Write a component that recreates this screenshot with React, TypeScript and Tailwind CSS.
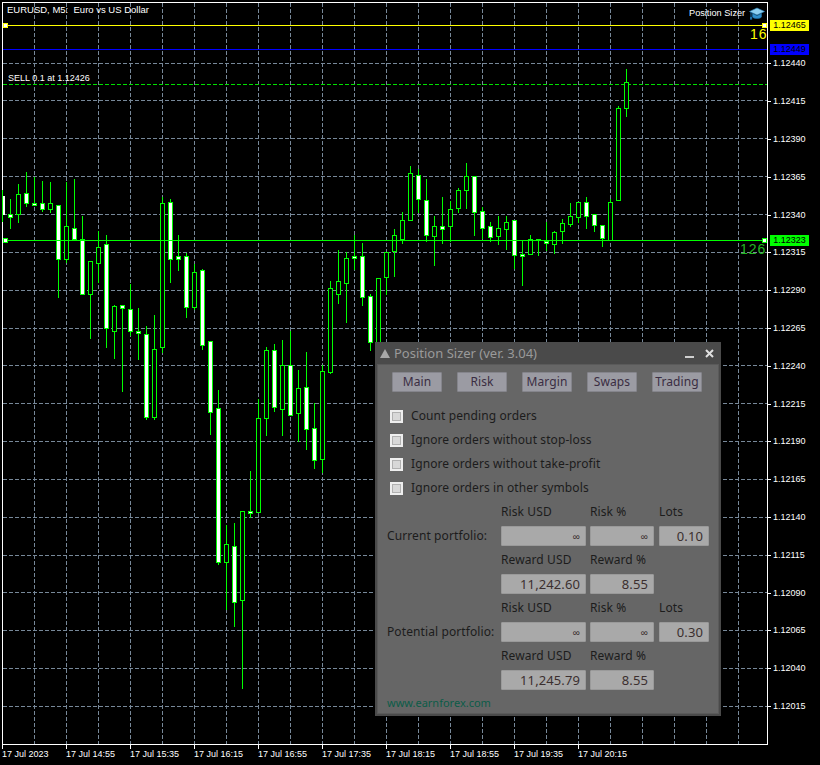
import React from "react";

type C = [number, number, number, number, number, number];
// x, wickTop, wickBottom, bodyTop, bodyBottom, filled
const candles: C[] = [
  [2,190,222,196,214,1],[10,199,229,214,217,1],[18,184,223,194,214,0],[26,172,207,193,203,1],[34,177,206,203,205,1],
  [42,181,212,203,209,1],[50,182,213,203,209,0],[58,205,298,205,259,1],[66,182,263,226,259,0],[74,179,240,228,239,1],
  [82,216,295,239,294,1],[90,261,339,261,294,0],[98,231,283,247,263,0],[106,235,348,244,328,1],[114,305,359,306,331,0],
  [122,305,392,305,308,1],[130,284,336,309,331,1],[138,308,360,331,333,1],[146,326,420,334,417,1],[154,315,420,349,417,0],
  [162,197,353,203,347,0],[170,199,283,202,259,1],[178,235,271,256,259,1],[186,253,318,256,307,1],[194,264,310,272,307,0],
  [202,269,350,270,345,1],[210,341,435,341,412,1],[218,390,565,408,562,1],[226,525,610,544,562,0],[234,523,627,546,602,1],
  [242,511,689,511,600,0],[250,471,518,511,513,1],[258,399,512,418,512,0],[266,347,436,350,418,0],[274,344,412,350,407,1],
  [282,340,436,365,409,0],[290,331,415,365,415,1],[298,370,442,388,413,0],[306,352,450,387,429,1],[314,403,469,428,460,1],
  [322,365,473,371,459,0],[330,281,374,288,372,0],[338,250,304,281,294,0],[346,252,323,258,283,0],[354,235,270,256,258,1],
  [362,243,306,256,297,1],[370,294,351,296,342,1],[378,278,345,278,345,0],[386,252,295,252,277,0],[394,229,277,235,251,0],
  [402,212,244,220,239,0],[410,166,220,173,220,0],[418,169,213,175,199,1],[426,179,242,200,235,1],[434,216,266,226,236,0],
  [442,197,244,226,229,1],[450,201,242,209,226,0],[458,188,213,190,208,0],[466,163,209,176,190,0],[474,176,236,176,212,1],
  [482,207,239,211,228,1],[490,222,242,226,237,1],[498,216,245,228,236,0],[506,216,250,222,229,0],[514,220,269,220,255,1],
  [522,240,286,254,256,1],[530,235,254,239,254,0],[538,239,256,239,240,1],[546,222,251,241,243,1],[554,231,254,232,244,0],
  [562,219,244,223,231,0],[570,203,227,216,224,0],[578,202,223,202,217,0],[586,197,229,202,216,1],[594,214,232,214,225,1],
  [602,225,247,225,238,1],[610,199,240,202,240,0],[618,106,200,108,200,0],[626,69,117,82,108,0],
];

const prices = ["1.12440","1.12415","1.12390","1.12365","1.12340","1.12315","1.12290","1.12265","1.12240","1.12215","1.12190","1.12165","1.12140","1.12115","1.12090","1.12065","1.12040","1.12015"];
const gridYs = [63,100,138,176,214,252,290,328,365,403,441,479,517,555,592,630,668,706];
const gridXs = Array.from({ length: 23 }, (_, i) => 34 + i * 32);
const times = ["17 Jul 2023","17 Jul 14:55","17 Jul 15:35","17 Jul 16:15","17 Jul 16:55","17 Jul 17:35","17 Jul 18:15","17 Jul 18:55","17 Jul 19:35","17 Jul 20:15"];
const tabs = ["Main","Risk","Margin","Swaps","Trading"];
const checks = ["Count pending orders","Ignore orders without stop-loss","Ignore orders without take-profit","Ignore orders in other symbols"];

function Chart() {
  return (
    <svg width="768" height="745" viewBox="0 0 768 745" className="block" shapeRendering="crispEdges">
      <rect x="2.5" y="2.5" width="765" height="742" fill="none" stroke="#fff" />
      {gridXs.map((x) => (
        <line key={x} x1={x + 0.5} x2={x + 0.5} y1="3" y2="744" stroke="#778899" strokeDasharray="4 2" />
      ))}
      {gridYs.map((y) => (
        <line key={y} x1="3" x2="767" y1={y + 0.5} y2={y + 0.5} stroke="#778899" strokeDasharray="4 2" />
      ))}
      <line x1="3" x2="767" y1="25.5" y2="25.5" stroke="#ffff00" />
      <line x1="3" x2="767" y1="49.5" y2="49.5" stroke="#0000ff" />
      <line x1="3" x2="767" y1="84.5" y2="84.5" stroke="#00e000" strokeDasharray="4 2" />
      {candles.map(([x, wt, wb, bt, bb, f]) => (
        <g key={x}>
          <line x1={x + 0.5} x2={x + 0.5} y1={wt} y2={wb} stroke="#00ff00" />
          <rect x={Math.max(x - 2, 3) + 0.5} y={bt + 0.5} width={x === 2 ? 1 : 4} height={Math.max(bb - bt, 1)} fill={f ? "#fff" : "#000"} stroke={x === 2 ? "#fff" : "#00ff00"} />
        </g>
      ))}
      <line x1="3" x2="767" y1="240.5" y2="240.5" stroke="#00ff00" />
      <rect x="3.5" y="23.5" width="4" height="4" fill="#fff" stroke="#ffff00" />
      <rect x="762.5" y="23.5" width="4" height="4" fill="#fff" stroke="#ffff00" />
      <rect x="3.5" y="238.5" width="4" height="4" fill="#fff" stroke="#00ff00" />
      <rect x="762.5" y="238.5" width="4" height="4" fill="#fff" stroke="#00ff00" />
    </svg>
  );
}

function Cap() {
  return (
    <svg width="16" height="14" viewBox="0 0 16 14">
      <path d="M3.5 6.5 V10 C5 12 11 12 12.5 10 V6.5 L8 8.7 Z" fill="#2f8fcb" stroke="#1c6fa8" strokeWidth="0.6" />
      <path d="M8 1 L15.5 4.5 L8 8 L0.5 4.5 Z" fill="#8fd0f0" stroke="#2a86c0" strokeWidth="0.6" />
      <path d="M2 5 V10" stroke="#1c6fa8" strokeWidth="1" />
      <rect x="1" y="10" width="2.2" height="2.6" fill="#1c6fa8" />
    </svg>
  );
}

function Field({ w, v, small }: { w: string; v: string; small?: boolean }) {
  return (
    <div className={`${w} h-[20px] bg-[#a9a9a9] rounded-[1px] border border-[#9a9a9a] flex items-center justify-end pr-[5px] text-[#3b2f2f] ${small ? "text-[10px]" : "text-[13px]"}`}>
      {v}
    </div>
  );
}

function Block({ title, lots, reward, rewardPct }: { title: string; lots: string; reward: string; rewardPct: string }) {
  return (
    <div className="grid grid-cols-[114px_89px_69px_50px] auto-rows-[24px] items-center">
      <div />
      <div>Risk USD</div>
      <div>Risk %</div>
      <div>Lots</div>
      <div className="whitespace-nowrap">{title}</div>
      <Field w="w-[85px]" v="∞" small />
      <Field w="w-[64px]" v="∞" small />
      <Field w="w-[50px]" v={lots} />
      <div />
      <div>Reward USD</div>
      <div className="col-span-2">Reward %</div>
      <div />
      <Field w="w-[85px]" v={reward} />
      <Field w="w-[64px]" v={rewardPct} />
    </div>
  );
}

function Panel() {
  return (
    <div className="absolute left-[375px] top-[342px] w-[346px] h-[374px] bg-[#4a4a4a] flex flex-col px-[2px] pb-[2px] font-['Noto_Sans',sans-serif] text-[12px] tracking-[0.1px] text-[#1c1c1c] leading-none">
      <div className="h-[22px] shrink-0 flex items-center pl-[3px] pr-[5px] text-[13px] tracking-normal text-[#9a9a9a]">
        <svg width="10" height="9" viewBox="0 0 10 9" className="mr-[4px]"><path d="M5 0 L10 9 H0 Z" fill="#a8a8a8" /></svg>
        <span className="flex-1">Position Sizer (ver. 3.04)</span>
        <svg width="9" height="9" viewBox="0 0 9 9" className="mr-[11px]"><rect x="0" y="7" width="9" height="2" fill="#d0d0d0" /></svg>
        <svg width="9" height="9" viewBox="0 0 9 9"><path d="M1 1 L8 8 M8 1 L1 8" stroke="#e0e0e0" strokeWidth="2" /></svg>
      </div>
      <div className="flex-1 bg-[#666666] border border-[#5a5a5a] pl-[9px] pt-[7px]">
        <div className="flex gap-[15px] pl-[5px]">
          {tabs.map((t) => (
            <div key={t} className="w-[50px] h-[20px] bg-[#9b9ba3] border border-[#85858c] rounded-[1px] flex items-center justify-center text-[#3a2d42]">{t}</div>
          ))}
        </div>
        <div className="flex flex-col pt-[12px] pl-[3px]">
          {checks.map((c) => (
            <div key={c} className="h-[24px] flex items-center gap-[8px]">
              <div className="w-[13px] h-[13px] bg-[#d8d8d8] border-2 border-[#eeeeee] shadow-[inset_0_0_0_1px_#b0b0b0]" />
              <span>{c}</span>
            </div>
          ))}
        </div>
        <Block title="Current portfolio:" lots="0.10" reward="11,242.60" rewardPct="8.55" />
        <Block title="Potential portfolio:" lots="0.30" reward="11,245.79" rewardPct="8.55" />
        <div className="text-[#0c5c48] pt-[5px] text-[11px] tracking-normal">www.earnforex.com</div>
      </div>
    </div>
  );
}

export default function App() {
  return (
    <div className="relative w-[820px] h-[765px] bg-black overflow-hidden font-['Liberation_Sans',sans-serif] text-[9px] text-white leading-none">
      <div className="flex">
        <Chart />
        <div className="w-[52px] pt-[45px]">
          {prices.map((p) => (
            <div key={p} className="h-[37.8px] flex items-center gap-[2px]">
              <div className="w-[3px] h-px bg-white" />
              <span>{p}</span>
            </div>
          ))}
        </div>
      </div>
      <div className="flex pl-[2px]">
        {times.map((t) => (
          <div key={t} className="w-[64px]">
            <div className="w-px h-[4px] bg-white" />
            <div className="pt-[1px] whitespace-nowrap">{t}</div>
          </div>
        ))}
      </div>

      <div className="absolute left-[7px] top-[5px] text-[9.5px]">EURUSD, M5:&nbsp; Euro vs US Dollar</div>
      <div className="absolute left-[8px] top-[74px]">SELL 0.1 at 1.12426</div>
      <div className="absolute left-[689px] top-[7px] flex items-center gap-[4px]"><span className="text-[9.2px]">Position Sizer</span><Cap /></div>

      <div className="absolute left-[770px] top-[20px] w-[39px] h-[11px] bg-[#ffff00] text-black flex items-center justify-center">1.12465</div>
      <div className="absolute left-[770px] top-[44px] w-[39px] h-[11px] bg-[#0000ff] text-black flex items-center justify-center">1.12449</div>
      <div className="absolute left-[770px] top-[235px] w-[39px] h-[11px] bg-[#00ff00] text-black flex items-center justify-center">1.12323</div>

      <div className="absolute left-[750px] top-[27px] text-[14px] tracking-[1px] text-[#ffff00]">16</div>
      <div className="absolute left-[740px] top-[242px] text-[14px] tracking-[1px] text-[#22b822]">126</div>

      <Panel />
    </div>
  );
}
